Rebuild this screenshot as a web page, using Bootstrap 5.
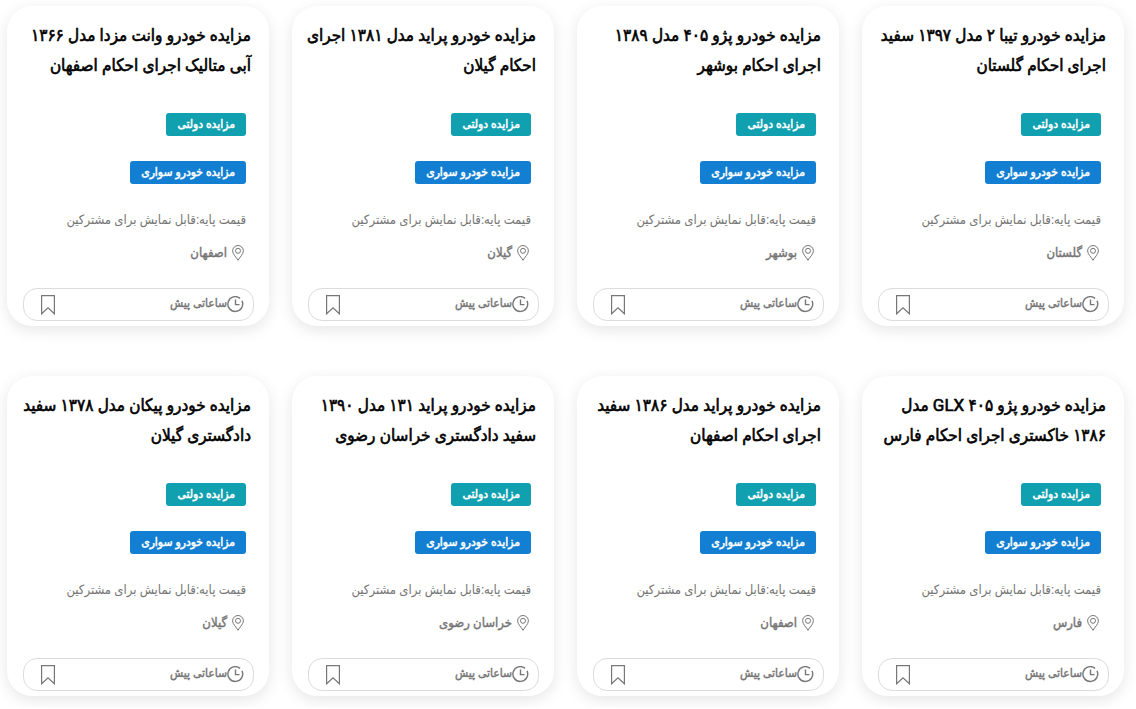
<!DOCTYPE html>
<html lang="fa" dir="rtl">
<head>
<meta charset="utf-8">
<meta name="viewport" content="width=device-width, initial-scale=1">
<title>مزایده خودرو</title>
<link href="https://cdn.jsdelivr.net/npm/bootstrap@5.3.0/dist/css/bootstrap.min.css" rel="stylesheet">
<style>
body{font-family:Roboto,"DejaVu Sans Condensed","DejaVu Sans",sans-serif;background:#fff;color:#757575}
.auctions{padding:6px 12px 12px 7px;column-gap:23px;row-gap:50px;display:grid;grid-template-columns:repeat(4,minmax(0,1fr))}
@media (max-width:991px){.auctions{grid-template-columns:repeat(2,minmax(0,1fr))}}
@media (max-width:575px){.auctions{grid-template-columns:minmax(0,1fr)}}
.auction{border-radius:25px;background:#fff;box-shadow:0 4px 15px rgba(0,0,0,.1);padding:14px 15px 5px 16px}
.auction-title{font-size:17px;line-height:30px;font-weight:400;-webkit-text-stroke:.6px;margin:0 3px 33px 0;white-space:nowrap}
.auction-title a{color:#000}
.tag{height:23px;line-height:23px;padding:0 11px;border-radius:3px;font-size:12px;-webkit-text-stroke:.5px;color:#fff;white-space:nowrap}
.tag-gov{background:#10a0b0}
.tag-car{background:#137fd2;margin-top:25px}
.details{padding-right:8px}
.price{font-size:13px;line-height:20px;margin-top:26px;white-space:nowrap}
.place{font-size:13px;line-height:20px;margin-top:13px;gap:5px;padding-right:2px}
.place-name,.foot time{-webkit-text-stroke:.4px}
.foot{height:33px;margin-top:25px;border:1px solid #dcdcdc;border-radius:14px;padding:0 9px 0 16px;font-size:12px}
.foot time{line-height:20px;margin-bottom:4px}
</style>
</head>
<body>
<main class="auctions" id="auctions"></main>
<template id="auction-template">
<article class="auction d-flex flex-column">
<h2 class="auction-title"><a href="#" class="text-decoration-none"></a></h2>
<div class="details d-flex flex-column align-items-start">
<a href="#" class="tag tag-gov text-decoration-none">مزایده دولتی</a>
<a href="#" class="tag tag-car text-decoration-none">مزایده خودرو سواری</a>
<div class="price">قیمت پایه:قابل نمایش برای مشترکین</div>
<div class="place d-flex align-items-center"><svg width="12" height="16" viewBox="0 0 12 16" fill="none" stroke="#777"><path d="M6 15.3C4.6 12.6.6 9.1.6 5.9a5.4 5.4 0 0 1 10.8 0C11.4 9.1 7.4 12.6 6 15.3Z"/><circle cx="6" cy="5.8" r="2.5"/></svg><span class="place-name"></span></div>
</div>
<div class="foot d-flex align-items-center justify-content-between">
<div class="d-flex align-items-center"><svg width="17" height="17" viewBox="0 0 17 17" fill="none" stroke="#777" stroke-width="1.4"><path d="M13.1 2.4A7.4 7.4 0 1 0 15 4.9M8.5 3.6v5h4"/></svg><time>ساعاتی پیش</time></div>
<button type="button" class="btn p-0 border-0 d-flex" aria-label="نشان کردن"><svg width="16" height="20" viewBox="0 0 16 20" fill="none" stroke="#777" stroke-width="1.2"><path d="M1.6.6h12.8v18.2L8 12.8l-6.4 6Z"/></svg></button>
</div>
</article>
</template>
<script src="https://cdn.jsdelivr.net/npm/bootstrap@5.3.0/dist/js/bootstrap.bundle.min.js"></script>
<script>
const auctions=[
["مزایده خودرو تیبا ۲ مدل ۱۳۹۷ سفید","اجرای احکام گلستان","گلستان"],
["مزایده خودرو پژو ۴۰۵ مدل ۱۳۸۹","اجرای احکام بوشهر","بوشهر"],
["مزایده خودرو پراید مدل ۱۳۸۱ اجرای","احکام گیلان","گیلان"],
["مزایده خودرو وانت مزدا مدل ۱۳۶۶","آبی متالیک اجرای احکام اصفهان","اصفهان"],
["مزایده خودرو پژو ۴۰۵ GLX مدل","۱۳۸۶ خاکستری اجرای احکام فارس","فارس"],
["مزایده خودرو پراید مدل ۱۳۸۶ سفید","اجرای احکام اصفهان","اصفهان"],
["مزایده خودرو پراید ۱۳۱ مدل ۱۳۹۰","سفید دادگستری خراسان رضوی","خراسان رضوی"],
["مزایده خودرو پیکان مدل ۱۳۷۸ سفید","دادگستری گیلان","گیلان"]];
const tpl=document.getElementById("auction-template"),list=document.getElementById("auctions");
for(const [a,b,place] of auctions){
const n=tpl.content.cloneNode(true);
n.querySelector(".auction-title a").append(a,document.createElement("br"),b);
n.querySelector(".place-name").textContent=place;
list.append(n);
}
</script>
</body>
</html>
